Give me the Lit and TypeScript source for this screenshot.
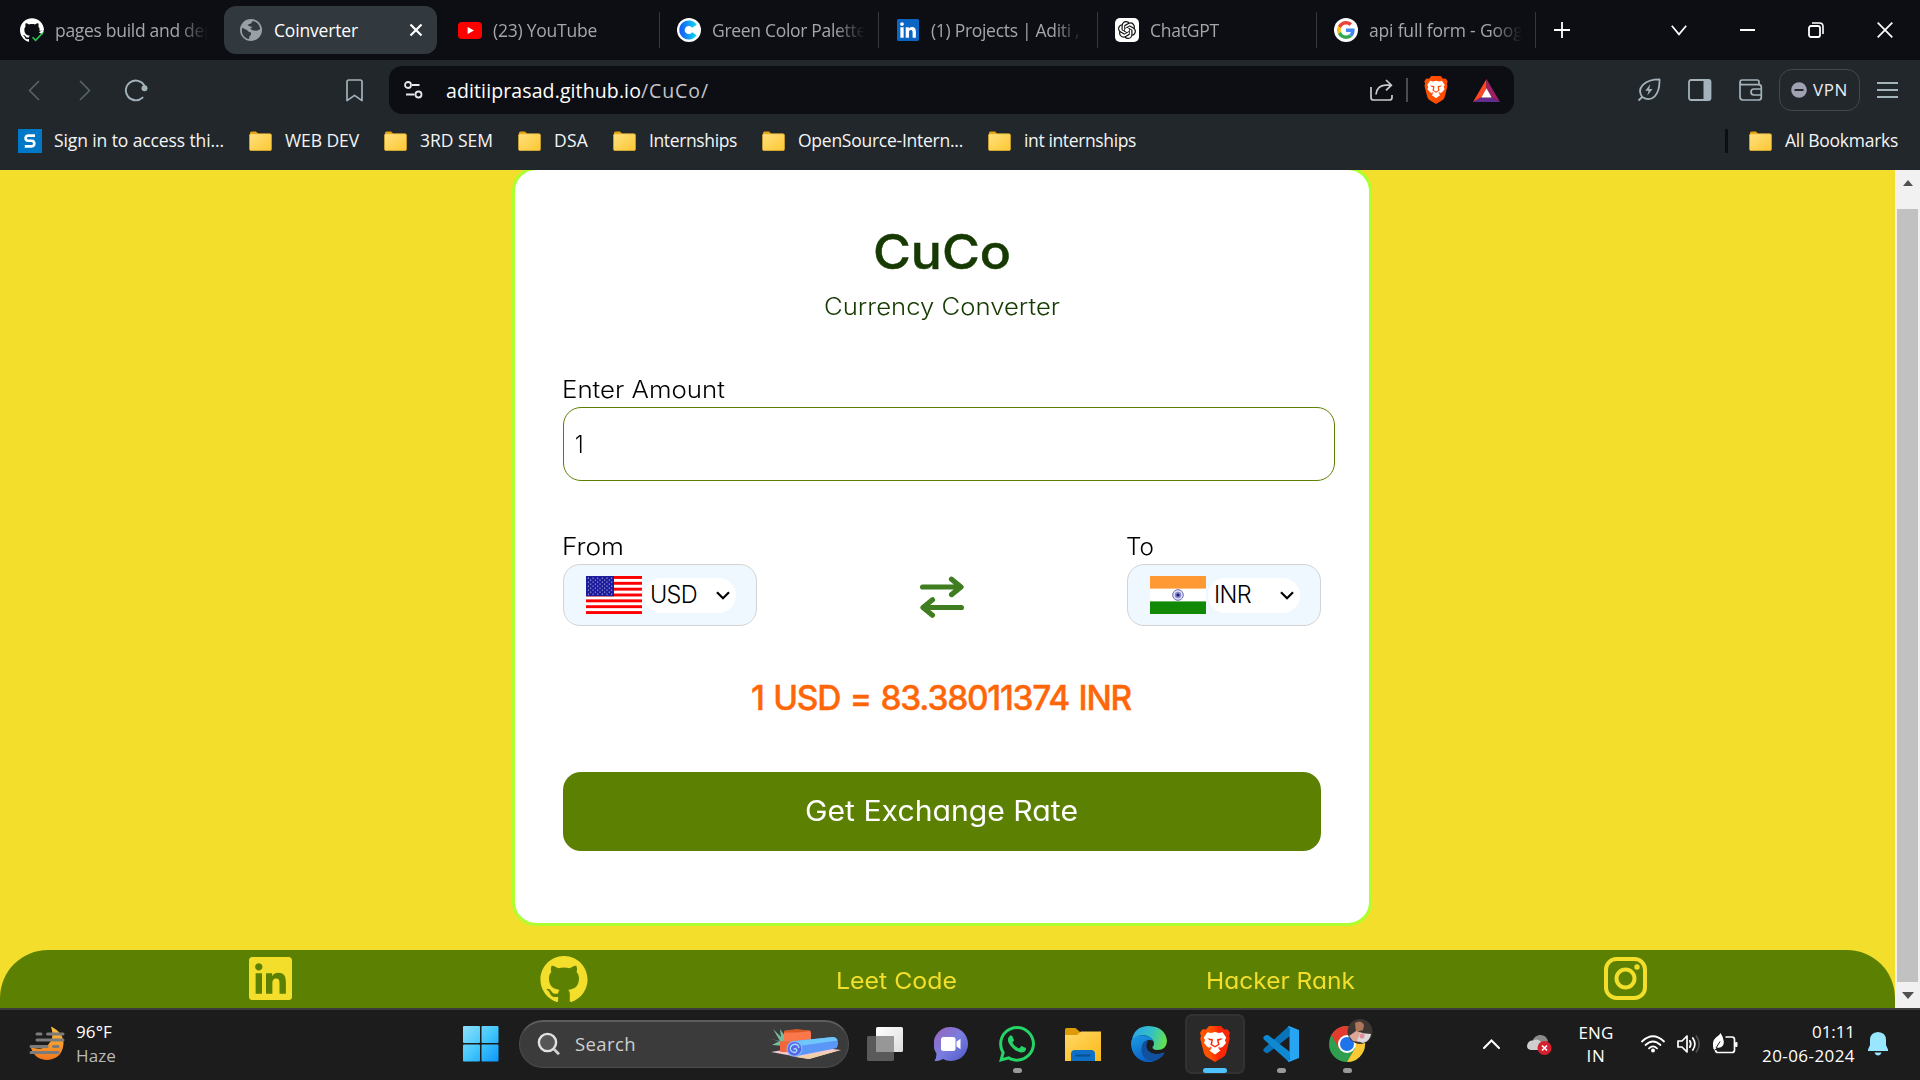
import { LitElement, html, svg, css, TemplateResult } from "lit";
import { customElement, property } from "lit/decorators.js";

/**
 * Single line of text that spans `w` pixels, by adjusting its tracking or,
 * with `stretch`, by widening the letters themselves.
 */
@customElement("fit-text")
class FitText extends LitElement {
  @property({ type: Number }) w = 0;
  @property({ type: Boolean }) stretch = false;
  static styles = css`
    :host { display: inline-block; white-space: nowrap; flex: none; }
    .run { display: inline-block; transform-origin: 0 50%; }
  `;
  render() { return html`<span class="run"><slot></slot></span>`; }
  firstUpdated() {
    const run = this.renderRoot.querySelector(".run") as HTMLElement;
    const n = (this.textContent || "").length;
    const natural = run.getBoundingClientRect().width;
    if (!this.w || !n) return;
    if (this.stretch) run.style.transform = `scaleX(${(this.w / natural).toFixed(4)})`;
    else run.style.letterSpacing = ((this.w - natural) / n).toFixed(3) + "px";
    this.style.width = this.w + "px";
  }
}

const icon = (w: number, h: number, box: string, body: unknown) =>
  html`<svg width=${w} height=${h} viewBox=${box} fill="none">${body}</svg>`;

const GITHUB = "M12 .297c-6.63 0-12 5.373-12 12 0 5.303 3.438 9.8 8.205 11.385.6.113.82-.258.82-.577 0-.285-.01-1.04-.015-2.04-3.338.724-4.042-1.61-4.042-1.61C4.422 18.07 3.633 17.7 3.633 17.7c-1.087-.744.084-.729.084-.729 1.205.084 1.838 1.236 1.838 1.236 1.07 1.835 2.809 1.305 3.495.998.108-.776.417-1.305.76-1.605-2.665-.3-5.466-1.332-5.466-5.93 0-1.31.465-2.38 1.235-3.22-.135-.303-.54-1.523.105-3.176 0 0 1.005-.322 3.3 1.23.96-.267 1.98-.399 3-.405 1.02.006 2.04.138 3 .405 2.28-1.552 3.285-1.23 3.285-1.23.645 1.653.24 2.873.12 3.176.765.84 1.23 1.91 1.23 3.22 0 4.61-2.805 5.625-5.475 5.92.42.36.81 1.096.81 2.22 0 1.606-.015 2.896-.015 3.286 0 .315.21.69.825.57C20.565 22.092 24 17.592 24 12.297c0-6.627-5.373-12-12-12";
const LINKEDIN = "M416 32H31.9C14.3 32 0 46.5 0 64.3v383.4C0 465.5 14.3 480 31.9 480H416c17.6 0 32-14.5 32-32.3V64.3c0-17.8-14.4-32.3-32-32.3zM135.4 416H69V202.2h66.5V416zm-33.2-243c-21.3 0-38.5-17.3-38.5-38.5S80.9 96 102.2 96c21.2 0 38.5 17.3 38.5 38.5 0 21.3-17.2 38.5-38.5 38.5zm282.1 243h-66.4V312c0-24.8-.5-56.7-34.5-56.7-34.6 0-39.9 27-39.9 54.9V416h-66.4V202.2h63.7v29.2h.9c8.9-16.8 30.6-34.5 62.9-34.5 67.2 0 79.7 44.3 79.7 101.9V416z";
const WHATSAPP = "M380.9 97.1C339 55.1 283.2 32 223.9 32c-122.4 0-222 99.6-222 222 0 39.1 10.2 77.3 29.6 111L0 480l117.7-30.9c32.4 17.7 68.9 27 106.1 27h.1c122.3 0 224.1-99.6 224.1-222 0-59.3-25.2-115-67.1-157zm-157 341.6c-33.2 0-65.7-8.9-94-25.7l-6.7-4-69.8 18.3L72 359.2l-4.4-7c-18.5-29.4-28.2-63.3-28.2-98.2 0-101.7 82.8-184.5 184.6-184.5 49.3 0 95.6 19.2 130.4 54.1 34.8 34.9 56.2 81.2 56.1 130.5 0 101.8-84.9 184.6-186.6 184.6zm101.2-138.2c-5.5-2.8-32.8-16.2-37.9-18-5.1-1.9-8.8-2.8-12.5 2.8-3.7 5.6-14.3 18-17.6 21.8-3.2 3.7-6.5 4.2-12 1.4-32.6-16.3-54-29.1-75.5-66-5.7-9.8 5.7-9.1 16.3-30.3 1.8-3.7.9-6.9-.5-9.7-1.4-2.8-12.5-30.1-17.1-41.2-4.5-10.8-9.1-9.3-12.5-9.5-3.2-.2-6.9-.2-10.6-.2-3.7 0-9.7 1.4-14.8 6.9-5.1 5.6-19.4 19-19.4 46.3 0 27.3 19.9 53.7 22.6 57.4 2.8 3.7 39.1 59.7 94.8 83.8 35.2 15.2 49 16.5 66.6 13.9 10.7-1.6 32.8-13.4 37.4-26.4 4.6-13 4.6-24.1 3.2-26.4-1.3-2.5-5-3.9-10.5-6.6z";
const OPENAI = "M22.2819 9.8211a5.9847 5.9847 0 0 0-.5157-4.9108 6.0462 6.0462 0 0 0-6.5098-2.9A6.0651 6.0651 0 0 0 4.9807 4.1818a5.9847 5.9847 0 0 0-3.9977 2.9 6.0462 6.0462 0 0 0 .7427 7.0966 5.98 5.98 0 0 0 .511 4.9107 6.051 6.051 0 0 0 6.5146 2.9001A5.9847 5.9847 0 0 0 13.2599 24a6.0557 6.0557 0 0 0 5.7718-4.2058 5.9894 5.9894 0 0 0 3.9977-2.9001 6.0557 6.0557 0 0 0-.7475-7.0729zm-9.022 12.6081a4.4755 4.4755 0 0 1-2.8764-1.0408l.1419-.0804 4.7783-2.7582a.7948.7948 0 0 0 .3927-.6813v-6.7369l2.02 1.1686a.071.071 0 0 1 .038.052v5.5826a4.504 4.504 0 0 1-4.4945 4.4944zm-9.6607-4.1254a4.4708 4.4708 0 0 1-.5346-3.0137l.142.0852 4.783 2.7582a.7712.7712 0 0 0 .7806 0l5.8428-3.3685v2.3324a.0804.0804 0 0 1-.0332.0615L9.74 19.9502a4.4992 4.4992 0 0 1-6.1408-1.6464zM2.3408 7.8956a4.485 4.485 0 0 1 2.3655-1.9728V11.6a.7664.7664 0 0 0 .3879.6765l5.8144 3.3543-2.0201 1.1685a.0757.0757 0 0 1-.071 0l-4.8303-2.7865A4.504 4.504 0 0 1 2.3408 7.872zm16.5963 3.8558L13.1038 8.364 15.1192 7.2a.0757.0757 0 0 1 .071 0l4.8303 2.7913a4.4944 4.4944 0 0 1-.6765 8.1042v-5.6772a.79.79 0 0 0-.407-.667zm2.0107-3.0231l-.142-.0852-4.7735-2.7818a.7759.7759 0 0 0-.7854 0L9.409 9.2297V6.8974a.0662.0662 0 0 1 .0284-.0615l4.8303-2.7866a4.4992 4.4992 0 0 1 6.6802 4.66zM8.3065 12.863l-2.02-1.1638a.0804.0804 0 0 1-.038-.0567V6.0742a4.4992 4.4992 0 0 1 7.3757-3.4537l-.142.0805L8.704 5.459a.7948.7948 0 0 0-.3927.6813zm1.0976-2.3654l2.602-1.4998 2.6069 1.4998v2.9994l-2.5974 1.4997-2.6067-1.4997Z";

const favicons: Record<string, TemplateResult> = {
  actions: icon(24, 24, "0 0 24 24", svg`
    <path d=${GITHUB} fill="#fff"/><path d="M10 24 V17.5 L15 14 L24 12 V24 Z" fill="#0d0e13"/>
    <path d="M23.6 11 A11.8 11.8 0 0 1 22.6 16.5 L19 14.6 Z" fill="#fff"/>
    <path d="M12.5 19.3 L15.6 22.4 L22.8 14.8" stroke="#2bc653" stroke-width="1.6"/>`),
  globe: icon(22, 22, "0 0 24 24", svg`
    <circle cx="12" cy="12" r="12" fill="#9aa0a6"/>
    <path d="M2.2 9.5 L7.5 12 L9.8 14.2 L12 14.8 V17.2 L10.3 18.8 L10 21.9 C5.5 21.3 2 17.5 2 12.5 Z" fill="#323a3f"/>
    <path d="M13.8 2.2 C18.5 2.9 21.6 6.5 22 11.2 L18.2 12.8 L13.6 12.2 L11.2 10.6 L13.6 8.6 L10.2 8 L8.2 6.3 L12 5 Z" fill="#323a3f"/>`),
  youtube: icon(24, 17, "0 0 24 17", svg`
    <rect width="24" height="17" rx="4" fill="#f00"/><path d="M9.6 4.9 L16 8.5 L9.6 12.1 Z" fill="#fff"/>`),
  canva: icon(24, 24, "0 0 24 24", svg`
    <defs><linearGradient id="cc" x1="0" x2="1"><stop offset="0" stop-color="#1467f5"/><stop offset="1" stop-color="#10cbf5"/></linearGradient></defs>
    <circle cx="12" cy="12" r="12" fill="#fff"/>
    <path d="M17.4 8.2 A6.8 6.8 0 1 0 17.4 15.8" stroke="url(#cc)" stroke-width="5.4"/>`),
  linkedin: icon(22, 22, "0 0 22 22", svg`
    <rect x=".5" y=".5" width="21" height="21" rx="2" fill="#fff"/><svg width="22" height="22" viewBox="0 32 448 448"><path d=${LINKEDIN} fill="#0a66c2"/></svg>`),
  chatgpt: icon(24, 24, "0 0 24 24", svg`
    <rect width="24" height="24" rx="5" fill="#fff"/><svg x="3" y="3" width="18" height="18" viewBox="0 0 24 24"><path d=${OPENAI} fill="#111"/></svg>`),
  google: icon(24, 24, "0 0 24 24", svg`
    <circle cx="12" cy="12" r="12" fill="#fff"/>
    <svg x="3" y="3" width="18" height="18" viewBox="0 0 48 48">
      <path fill="#EA4335" d="M24 9.5c3.54 0 6.71 1.22 9.21 3.6l6.85-6.85C35.9 2.38 30.47 0 24 0 14.62 0 6.51 5.38 2.56 13.22l7.98 6.19C12.43 13.72 17.74 9.5 24 9.5z"/>
      <path fill="#4285F4" d="M46.98 24.55c0-1.57-.15-3.09-.38-4.55H24v9.02h12.94c-.58 2.96-2.26 5.48-4.78 7.18l7.73 6c4.51-4.18 7.09-10.36 7.09-17.65z"/>
      <path fill="#FBBC05" d="M10.53 28.59c-.48-1.45-.76-2.99-.76-4.59s.27-3.14.76-4.59l-7.98-6.19C.92 16.46 0 20.12 0 24c0 3.88.92 7.54 2.56 10.78l7.97-6.19z"/>
      <path fill="#34A853" d="M24 48c6.48 0 11.93-2.13 15.89-5.81l-7.73-6c-2.15 1.45-4.92 2.3-8.16 2.3-6.26 0-11.57-4.22-13.47-9.91l-7.98 6.19C6.51 42.62 14.62 48 24 48z"/>
    </svg>`),
};

const lion = (w: number, h: number, id: string, a: string, b: string) => icon(w, h, "0 0 30 36", svg`
  <defs><linearGradient id=${id} x1="0" x2="1"><stop offset=".35" stop-color=${a}/><stop offset=".65" stop-color=${b}/></linearGradient></defs>
  <path d="M9 0 H21 L24 3.4 L27.4 3.2 L30 6.8 L29 10 L29.8 12.5 L26 27.5 Q25 30 22.5 31.5 L15 36 L7.5 31.5 Q5 30 4 27.5 L.2 12.5 L1 10 L0 6.8 L2.6 3.2 L6 3.4 Z" fill="url(#${id})"/>
  <path d="M7.4 6.2 L11 7 L15 6.1 L19 7 L22.6 6.2 L26.2 11.4 L25 14.3 L26 17 L22.8 20.8 L18.3 22.7 L20.6 24.5 L15 28.6 L9.4 24.5 L11.7 22.7 L7.2 20.8 L4 17 L5 14.3 L3.8 11.4 Z" fill="#fff"/>
  <path d="M7.2 12.2 L12.6 12.9 L13 14 L12.1 18.3 L15 20 L17.9 18.3 L17 14 L17.4 12.9 L22.8 12.2 L20.4 14.3 L18.6 14.4 L19.6 18.7 L15 21.6 L10.4 18.7 L11.4 14.4 L9.6 14.3 Z" fill=${b}/>
  <path d="M9.5 20.3 L11.8 21.6 L11 22.4 Z M20.5 20.3 L18.2 21.6 L19 22.4 Z" fill=${b}/>`);

const folder = icon(23, 20, "0 0 23 20", svg`
  <defs><linearGradient id="fo" x1="0" y1="0" x2="1" y2="1"><stop offset="0" stop-color="#ffe17e"/><stop offset="1" stop-color="#fcc732"/></linearGradient></defs>
  <path d="M1 2 Q1 .5 2.5 .5 H7 L9.5 3 V6 H1 Z" fill="#e8a30c"/>
  <rect x=".5" y="2.7" width="22" height="17" rx="1.6" fill="url(#fo)" stroke="#d9a62a" stroke-width=".7"/>`);

const chevronDown = icon(14, 9, "0 0 14 9", svg`<path d="M1 1.2 L7 7.2 L13 1.2" stroke="#000" stroke-width="2.2"/>`);

const flagUS = icon(56, 38, "0 0 56 38", svg`
  <rect width="56" height="38" fill="#fff"/>
  ${[0, 1, 2, 3, 4, 5, 6].map(i => svg`<rect y=${(i * 2 * 38) / 13} width="56" height="2.92" fill="#ff0000"/>`)}
  <rect width="28" height="20.2" fill="#1b1b9b"/>
  ${Array.from({ length: 9 }, (_, r) => Array.from({ length: r % 2 ? 5 : 6 }, (_, c) =>
    svg`<circle cx=${2.4 + c * 4.65 + (r % 2 ? 2.3 : 0)} cy=${2.1 + r * 2} r=".65" fill="#c9c9ee"/>`))}`);

const flagIN = icon(56, 38, "0 0 56 38", svg`
  <rect width="56" height="38" fill="#fff"/><rect width="56" height="12.6" fill="#ff9933"/><rect y="25.4" width="56" height="12.6" fill="#128807"/>
  <circle cx="28" cy="19" r="5.3" fill="#e2e2f4" stroke="#6a6ab8" stroke-width="1"/><circle cx="28" cy="19" r="3.2" fill="#8a8acb"/><circle cx="28" cy="19" r="1.6" fill="#1a1a8c"/>`);

const tabs = [
  { icon: "actions", title: "pages build and deployment", w: 224 },
  { icon: "globe", title: "Coinverter", w: 84, active: true },
  { icon: "youtube", title: "(23) YouTube", w: 104, sep: true },
  { icon: "canva", title: "Green Color Palettes", w: 162, sep: true },
  { icon: "linkedin", title: "(1) Projects | Aditi , Prasad", w: 207, sep: true },
  { icon: "chatgpt", title: "ChatGPT", w: 69, sep: true },
  { icon: "google", title: "api full form - Google Search", w: 226, sep: true },
];

const bookmarks: [string, number][] = [
  ["WEB DEV", 74], ["3RD SEM", 73], ["DSA", 34], ["Internships", 88], ["OpenSource-Intern...", 165], ["int internships", 112],
];

@customElement("app-root")
class AppRoot extends LitElement {
  static styles = css`
    :host { display: flex; flex-direction: column; width: 1920px; height: 1080px; overflow: hidden; font-family: "Open Sans", "Noto Sans", sans-serif; font-size: 17.5px; color: #fff; }
    * { box-sizing: border-box; }
    svg { display: block; flex: none; }
    .c { display: flex; align-items: center; justify-content: center; }

    .tabs { height: 60px; flex: none; display: flex; align-items: center; background: #0d0e13; padding-left: 3px; }
    .tab { width: 219px; height: 48px; flex: none; display: flex; align-items: center; padding-left: 17px; color: #a5a6a9; }
    .tab.sep { border-right: 1px solid #36373c; height: 36px; }
    .tab .fav { width: 24px; flex: none; margin-right: 11px; display: flex; justify-content: center; }
    .tab .label { width: 153px; overflow: hidden; line-height: 26px; margin-top: -1px; -webkit-mask-image: linear-gradient(90deg, #000 80%, transparent 100%); mask-image: linear-gradient(90deg, #000 80%, transparent 100%); }
    .tab.active { background: #31383e; border-radius: 12px; width: 213px; margin: 0 4px 0 2px; padding-left: 15px; color: #fff; }
    .tab.active .label { width: 133px; -webkit-mask-image: none; mask-image: none; }
    .tabs .plus { width: 54px; height: 36px; margin-left: -1px; }
    .tabs .win { margin-left: auto; margin-right: 1px; display: grid; grid-template-columns: repeat(4, 68.6px); align-items: center; justify-items: center; }

    .toolbar { height: 60px; flex: none; display: grid; grid-template-columns: 8px 51px 51px 51px 158px 70px 1125px 109px 51px 51px 51px 87px 1fr; align-items: center; background: #22272b; justify-items: center; }
    .toolbar .b1 { grid-column: 2; }
    .toolbar .mark { grid-column: 6; }
    .address { grid-column: 7; width: 1125px; height: 48px; border-radius: 13px; background: #0d0e13; display: flex; align-items: center; padding-left: 15px; font-size: 19.5px; line-height: 28px; }
    .address .site { margin-left: 23px; padding-top: 1px; }
    .address .path { color: #c4c5c8; padding-top: 1px; }
    .address .right { margin-left: auto; display: flex; align-items: center; padding-right: 14px; }
    .address .bar { width: 2px; height: 24px; background: #4b4c51; margin: 0 16px 0 13px; }
    .address .right svg:last-child { margin-left: 25px; }
    .leafcell { grid-column: 9; }
    .vpn { width: 81px; height: 42px; border: 1.5px solid #3e4a4f; border-radius: 13px; display: flex; align-items: center; padding-left: 11px; gap: 6px; color: #eceef0; font-size: 17px; }
    .vpn fit-text { margin-top: -1px; }
    .menu { justify-self: start; margin-left: 14px; }

    .marks { height: 50px; flex: none; background: #22272b; display: flex; align-items: flex-start; padding: 6px 22px 0 18px; font-size: 17.5px; color: #f4f5f6; }
    .mark-item { height: 30px; display: flex; align-items: center; gap: 13px; margin-left: 25px; }
    .mark-item fit-text { margin-top: -2px; }
    .mark-item.first { margin-left: 0; gap: 12px; }
    .mark-item.all { margin-left: 21px; }
    .marks .bar { width: 3px; height: 24px; border-radius: 1px; margin: 3px 0 0 auto; background: #0d0e13; }

    .view { height: 838px; flex: none; display: flex; background: #f1f1f1; }
    .page { width: 1895px; height: 838px; overflow: hidden; background: #f3de2c; display: flex; flex-direction: column; font-family: Inter, sans-serif; font-feature-settings: "cv11"; }
    .card { width: 860px; height: 759px; flex: none; margin: -3px 0 0 512px; border: 3px solid #adff2f; border-radius: 24px; background: #fff; padding: 0 48px; color: #000; font-size: 23.5px; font-weight: 300; }
    .title { display: flex; justify-content: center; margin-top: 53px; height: 58px; line-height: 58px; font-size: 48px; font-weight: 500; color: #163a02; -webkit-text-stroke: .5px #163a02; }
    .sub { display: flex; justify-content: center; height: 30px; line-height: 30px; margin-top: 11px; color: #163a02; }
    .lab { height: 30px; line-height: 30px; margin-left: -1px; }
    .amount-lab { margin-top: 53px; }
    .amount { margin-top: 2px; width: 772px; height: 74px; border: 1px solid #5c8001; border-radius: 18px; padding-left: 11px; line-height: 74px; }
    .pair { display: flex; margin-top: 51px; width: 758px; justify-content: space-between; }
    .pick { margin-top: 2px; width: 194px; height: 62px; border: 1px solid #d3d3d3; border-radius: 17px; background: #f0f8ff; display: flex; align-items: center; padding-left: 22px; }
    .sel { width: 92px; height: 35px; margin-left: 2px; border-radius: 18px; background: #fff; display: flex; align-items: center; justify-content: space-between; padding: 0 6px; line-height: 34px; }
    .swap { padding-top: 44px; }
    .result { display: flex; justify-content: center; width: 756px; margin-top: 51px; height: 44px; line-height: 43px; font-size: 33.5px; font-weight: 500; color: #ff6608; -webkit-text-stroke: .4px #ff6608; word-spacing: 2px; }
    .go { margin-top: 51px; width: 758px; height: 79px; border-radius: 18px; background: #5c8001; color: #fff; font-size: 28px; font-weight: 400; padding: 0 1px 1px 0; }
    .foot { margin-top: auto; height: 58px; flex: none; border-radius: 48px 48px 0 0; background: #5c8001; color: #f3de2c; font-size: 23.5px; font-weight: 400; display: grid; grid-template-columns: 540px 296px 370px 398px 1fr; align-items: center; }
    .foot .li { margin-left: 249px; }
    .foot svg { margin-top: -1px; }
    .foot .txt { padding-top: 2px; }
    .scroll { width: 25px; height: 838px; display: flex; flex-direction: column; align-items: center; padding: 10px 0 9px; }
    .thumb { width: 21px; height: 773px; margin-top: 23px; margin-bottom: auto; background: #c1c1c1; }

    .task { height: 72px; flex: none; border-top: 2px solid #3b3b3c; background: #1c1c1c; display: grid; grid-template-columns: 29px 47px 372px 66px 5px 333px 66px 66px 66px 66px 66px 66px 66px 66px 80px 1fr; align-items: center; font-size: 17px; }
    .weather { grid-column: 2; margin-top: -3px; }
    .wtext { line-height: 24px; display: flex; flex-direction: column; color: #fff; margin-top: -2px; }
    .wtext .dim { color: #b9b9b9; }
    .search { grid-column: 6; width: 330px; height: 48px; margin-top: -3px; border-radius: 24px; background: #3b3b3b; border: 1px solid #4c4c4c; border-top: 2px solid #5c5c5c; display: flex; align-items: center; padding: 0 7px 0 17px; color: #cfcfcf; font-size: 18.5px; gap: 14px; }
    .search fit-text { margin-top: -1px; }
    .search .pic { margin-left: auto; }
    .app { width: 66px; height: 60px; position: relative; display: flex; align-items: center; justify-content: center; margin-top: -2px; }
    .app .dot { position: absolute; bottom: 1px; width: 9px; height: 5px; border-radius: 3px; background: #999; }
    .app.on { width: 60px; margin-left: 3px; border-radius: 7px; background: #2a2a2a; border: 2px solid #323232; }
    .app.on .dot { bottom: -1px; width: 24px; background: #4cc2ff; }
    .start { margin-top: -3px; }
    .tray { grid-column: 16; display: grid; grid-template-columns: 44px 52px 62px 36px 36px 49px 93px 13px 20px; align-items: center; line-height: 23px; margin-top: -3px; padding-left: 23px; }
    .lang { display: flex; flex-direction: column; align-items: center; width: 34px; margin-top: 1px; }
    .clock { display: flex; flex-direction: column; align-items: flex-end; line-height: 24px; }
  `;

  private app(pic: unknown, dot = false, on = false) {
    return html`<div class="app ${on ? "on" : ""}">${pic}${dot ? html`<span class="dot"></span>` : ""}</div>`;
  }

  private renderTabs() {
    return html`<div class="tabs">
      ${tabs.map(t => html`<div class="tab ${t.active ? "active" : ""} ${t.sep ? "sep" : ""}">
        <span class="fav">${favicons[t.icon]}</span>
        <span class="label"><fit-text .w=${t.w}>${t.title}</fit-text></span>
        ${t.active ? icon(18, 14, "0 0 18 14", svg`<path d="M3.5 1.5 L14.5 12.5 M14.5 1.5 L3.5 12.5" stroke="#fff" stroke-width="2.2"/>`) : ""}
      </div>`)}
      <div class="plus c">${icon(16, 16, "0 0 16 16", svg`<path d="M8 0 V16 M0 8 H16" stroke="#fff" stroke-width="1.8"/>`)}</div>
      <div class="win">
        ${icon(16, 11, "0 0 16 11", svg`<path d="M.8 .8 L8 9.4 L15.2 .8" stroke="#fff" stroke-width="1.7"/>`)}
        ${icon(16, 3, "0 0 16 3", svg`<rect width="15" height="2" fill="#fff"/>`)}
        ${icon(16, 16, "0 0 16 16", svg`<rect x="1" y="4" width="11" height="11" rx="2" stroke="#fff" stroke-width="1.8"/><path d="M4 1 H11.5 Q15 1 15 4.5 V12" stroke="#fff" stroke-width="1.6"/>`)}
        ${icon(16, 16, "0 0 16 16", svg`<path d="M.7 .7 L15.3 15.3 M15.3 .7 L.7 15.3" stroke="#fff" stroke-width="1.7"/>`)}
      </div>
    </div>`;
  }

  private renderToolbar() {
    const g = "#a3b2bb";
    return html`<div class="toolbar">
      <div class="b1">${icon(12, 21, "0 0 12 21", svg`<path d="M11 1 L1.5 10.5 L11 20" stroke="#57646a" stroke-width="1.6"/>`)}</div>
      ${icon(12, 21, "0 0 12 21", svg`<path d="M1 1 L10.5 10.5 L1 20" stroke="#57646a" stroke-width="1.6"/>`)}
      ${icon(24, 23, "0 0 24 23", svg`<path d="M18.6 18.6 A9.9 9.9 0 1 1 20.4 6.6" stroke=${g} stroke-width="1.9" stroke-linecap="round"/><circle cx="20.5" cy="9.2" r="3" fill=${g}/>`)}
      <div class="mark">${icon(17, 23, "0 0 17 23", svg`<path d="M1 2.8 Q1 1 2.8 1 H14.2 Q16 1 16 2.8 V21.6 L8.5 16.4 L1 21.6 Z" stroke=${g} stroke-width="1.7" stroke-linejoin="round"/>`)}</div>
      <div class="address">
        ${icon(19, 18, "0 0 19 18", svg`<g stroke="#e6e7e8" stroke-width="1.8"><circle cx="4" cy="4" r="3"/><path d="M8 4 H15.5 M2 13.5 H10.5"/><circle cx="14.5" cy="13.5" r="3"/></g>`)}
        <span class="site"><fit-text .w=${195}>aditiiprasad.github.io</fit-text></span><span class="path"><fit-text .w=${68}>/CuCo/</fit-text></span>
        <div class="right">
          ${icon(23, 22, "0 0 23 22", svg`<path d="M1 8 V18.5 Q1 21 3.5 21 H19.5 Q22 21 22 18.5 V16 M6 15.5 Q7 6.5 15.5 6.2 H21 M16 1 L21.4 6.2 L16 11.4" stroke="#c8cacc" stroke-width="1.7"/>`)}
          <span class="bar"></span>
          ${lion(24, 28, "lionA", "#ff5000", "#ff4a00")}
          ${icon(27, 23, "0 0 27 23", svg`<path d="M13.5 0 L0 23 L8.5 18.3 L13.5 9.2 Z" fill="#ff4724"/><path d="M13.5 0 L27 23 L18.5 18.3 L13.5 9.2 Z" fill="#9e1f63"/><path d="M0 23 H27 L18.5 18.3 H8.5 Z" fill="#662d91"/><path d="M13.5 9.2 L18.7 18.4 H8.3 Z" fill="#fff"/>`)}
        </div>
      </div>
      <div class="leafcell">${icon(24, 24, "0 0 24 24", svg`<path d="M1.5 22.5 L5.2 19 C-1 10 7.5 1.3 22.5 1.3 C23 17 15 25 5.2 19" stroke=${g} stroke-width="1.8" stroke-linejoin="round"/><path d="M13.3 6.3 L8.2 12.8 H11.6 L10.3 17.6 L15.6 11 H12.2 Z" fill=${g}/>`)}</div>
      ${icon(24, 22, "0 0 24 22", svg`<rect x="1" y="1" width="21.5" height="20" rx="2" stroke=${g} stroke-width="1.8"/><path d="M15.5 1 H21 Q22.5 1 22.5 2.5 V19.5 Q22.5 21 21 21 H15.5 Z" fill=${g}/>`)}
      ${icon(24, 22, "0 0 24 22", svg`<g stroke=${g} stroke-width="1.7"><path d="M20 5.5 V3 Q20 1 18 1 H3 Q1 1 1 3.5 V18 Q1 21 4 21 H19.5 Q22.3 21 22.3 18.5 V8 Q22.3 5.6 19.5 5.6 H3 Q1 5.4 1 3.2"/><path d="M22.5 10 H15 Q12 10 12 13 Q12 16 15 16 H22.5"/></g>`)}
      <div class="vpn">${icon(16, 16, "0 0 16 16", svg`<circle cx="8" cy="8" r="7.8" fill="#a0a1b2"/><rect x="3.5" y="7" width="9" height="2" fill="#22272b"/>`)}<fit-text .w=${35}>VPN</fit-text></div>
      <div class="menu">${icon(21, 16, "0 0 21 16", svg`<path d="M0 1 H21 M0 8 H21 M0 15 H21" stroke=${g} stroke-width="1.8"/>`)}</div>
    </div>`;
  }

  private renderMarks() {
    return html`<div class="marks">
      <div class="mark-item first">${icon(24, 24, "0 0 24 24", svg`<rect width="24" height="24" fill="#0078c8"/><path d="M17 6.6 H10.5 Q7.6 6.6 7.6 9.2 Q7.6 11.6 10.5 11.8 H13.6 Q16.3 12 16.3 14.6 Q16.3 17.4 13.5 17.4 H6.8" stroke="#fff" stroke-width="2.6"/>`)}<fit-text .w=${170}>Sign in to access thi...</fit-text></div>
      ${bookmarks.map(([t, w]) => html`<div class="mark-item">${folder}<fit-text .w=${w}>${t}</fit-text></div>`)}
      <span class="bar"></span>
      <div class="mark-item all">${folder}<fit-text .w=${113}>All Bookmarks</fit-text></div>
    </div>`;
  }

  private picker(label: string, lw: number, flag: unknown, code: string, w: number) {
    return html`<div>
      <div class="lab"><fit-text stretch .w=${lw}>${label}</fit-text></div>
      <div class="pick">${flag}<div class="sel"><fit-text .w=${w}>${code}</fit-text>${chevronDown}</div></div>
    </div>`;
  }

  private renderPage() {
    return html`<div class="view">
      <div class="page">
        <div class="card">
          <div class="title"><fit-text stretch .w=${138}>CuCo</fit-text></div>
          <div class="sub"><fit-text stretch .w=${236}>Currency Converter</fit-text></div>
          <div class="lab amount-lab"><fit-text stretch .w=${163}>Enter Amount</fit-text></div>
          <div class="amount"><fit-text stretch .w=${8.5}>1</fit-text></div>
          <div class="pair">
            ${this.picker("From", 62, flagUS, "USD", 47)}
            <div class="swap">${icon(44, 42, "0 0 44 42", svg`<path d="M2.6 11 H40 M31.5 3.2 L41 11 L31.5 18.6 M41.4 31.5 H4 M12.5 23.8 L3 31.5 L12.5 39.2" stroke="#3f7d20" stroke-width="5.2" stroke-linecap="round" stroke-linejoin="round"/>`)}</div>
            ${this.picker("To", 28, flagIN, "INR", 37)}
          </div>
          <div class="result"><fit-text .w=${380}>1 USD = 83.38011374 INR</fit-text></div>
          <div class="go c"><fit-text stretch .w=${273}>Get Exchange Rate</fit-text></div>
        </div>
        <div class="foot">
          <div class="li">${icon(43, 43, "0 32 448 448", svg`<path d=${LINKEDIN} fill="#f3de2c"/>`)}</div>
          <div class="gh">${icon(48, 46, "0 .3 24 23.4", svg`<path d=${GITHUB} fill="#f3de2c"/>`)}</div>
          <div class="txt"><fit-text stretch .w=${121}>Leet Code</fit-text></div>
          <div class="txt"><fit-text stretch .w=${149}>Hacker Rank</fit-text></div>
          <div>${icon(43, 43, "0 0 43 43", svg`<rect x="2" y="2" width="39" height="39" rx="10.5" stroke="#f3de2c" stroke-width="4"/><circle cx="21.5" cy="21.5" r="9" stroke="#f3de2c" stroke-width="4"/><circle cx="33" cy="10" r="2.7" fill="#f3de2c"/>`)}</div>
        </div>
      </div>
      <div class="scroll">
        ${icon(10, 6, "0 0 10 6", svg`<path d="M5 0 L10 6 H0 Z" fill="#505050"/>`)}
        <div class="thumb"></div>
        ${icon(12, 7, "0 0 12 7", svg`<path d="M6 7 L0 0 H12 Z" fill="#505050"/>`)}
      </div>
    </div>`;
  }

  private renderTask() {
    return html`<div class="task">
      <div class="weather">${icon(36, 35, "0 0 36 35", svg`
        <defs><linearGradient id="mn" x1="0" y1="0" x2="0" y2="1"><stop offset="0" stop-color="#fcc443"/><stop offset="1" stop-color="#f0761e"/></linearGradient></defs>
        <path d="M22 .5 Q35 7 34.5 18 Q33 33.5 17 34 Q5 33 1.5 20.5 Q12 25.5 19 19 Q26 12 22 .5 Z" fill="url(#mn)"/>
        <path d="M8 8 H12 M18.5 8 H34 M8 14 H34 M2 20.5 H18 M24.5 20.5 H29 M2 26.5 H29" stroke="#7b7b7b" stroke-width="3" stroke-linecap="round"/>`)}</div>
      <div class="wtext"><fit-text .w=${36}>96°F</fit-text><span class="dim"><fit-text .w=${40}>Haze</fit-text></span></div>
      <div class="start c">${icon(36, 36, "0 0 36 36", svg`
        <defs><linearGradient id="wn" x1="0" y1="0" x2="36" y2="36" gradientUnits="userSpaceOnUse"><stop offset="0" stop-color="#8fe0fb"/><stop offset=".5" stop-color="#43c7fb"/><stop offset="1" stop-color="#0995fb"/></linearGradient></defs>
        <g fill="url(#wn)"><rect width="17" height="17" rx="1"/><rect x="18.5" width="17" height="17" rx="1"/><rect y="18.5" width="17" height="17" rx="1"/><rect x="18.5" y="18.5" width="17" height="17" rx="1"/></g>`)}</div>
      <div class="search">
        ${icon(24, 24, "0 0 24 24", svg`<circle cx="10.5" cy="10.5" r="8.6" fill="#565656" stroke="#e2e2e2" stroke-width="2.4"/><path d="M16.8 17 L22 22.2" stroke="#cfcfcf" stroke-width="2.8"/>`)}
        <fit-text .w=${61}>Search</fit-text>
        <span class="pic">${icon(70, 32, "0 0 70 32", svg`
          <path d="M0 24 L36 18 L70 22 L38 31 Z" fill="#f3c9cf"/>
          <path d="M24 29 L69 22 L38 31 Z" fill="#f2d0a6"/>
          <path d="M2 1 L10 9 L9 1 L14 8 V15 L0 11 L9 13 Z M1 17 L14 10 V18 Z" fill="#74bd9c"/>
          <rect x="9" y="13" width="22" height="11" rx="1.5" fill="#f2663a"/>
          <rect x="13" y="2.5" width="27" height="11" rx="2" fill="#f9774b"/><path d="M13 4.5 Q13 2.5 15 2.5 L26 1 L40 3 L26 4.5 Z" fill="#d95a26"/>
          <path d="M24 13 L62 9 Q67 9.5 67 15 Q67 20 64 20.5 L26 28 Z" fill="#5a97f6"/>
          <path d="M24 13 L62 9 Q66 9.5 66.5 12.5 L28 18 Z" fill="#6fc6fb"/>
          <circle cx="23.5" cy="20.8" r="7.4" fill="#5a62e8" stroke="#7ab8fb" stroke-width="1.2"/><path d="M28 20 Q27 15.5 22.5 16.5 Q18.5 18 19.5 22 Q21.5 25.5 25 24 Q27 21.5 24 20.5 L22.5 21.5" stroke="#9fdcff" stroke-width="1.4"/>`)}</span>
      </div>
      ${this.app(icon(36, 34, "0 0 36 34", svg`
        <defs><linearGradient id="tv" x1="0" x2="1" y2="1"><stop offset="0" stop-color="#fff"/><stop offset="1" stop-color="#dcdcdc"/></linearGradient></defs>
        <rect x="9" y="0" width="27" height="25" rx="1.5" fill="url(#tv)"/><rect x="0" y="9" width="27" height="25" rx="1.5" fill="#5a5a5a"/><path d="M9 9 H27 V25 H9 Z" fill="#979797"/>`))}
      ${this.app(icon(34, 34, "0 0 34 34", svg`
        <defs><linearGradient id="tm" x1="0" y1="0" x2="1" y2="1"><stop offset="0" stop-color="#9a62b8"/><stop offset=".5" stop-color="#7a7ee0"/><stop offset="1" stop-color="#5059c9"/></linearGradient></defs>
        <path d="M17 0 A17 17 0 1 1 9 32 Q5 34.5 .5 34 Q3 30.5 2.2 26 A17 17 0 0 1 17 0 Z" fill="url(#tm)"/><rect x="7" y="10" width="14.5" height="14" rx="2.5" fill="#fff"/><path d="M22.5 14.5 L26.5 11.8 V22.2 L22.5 19.5 Z" fill="#fff"/>`))}
      ${this.app(icon(36, 36, "0 32 448 448", svg`<path d=${WHATSAPP} fill="#25d366"/>`), true)}
      ${this.app(icon(36, 33, "0 0 36 33", svg`
        <defs><linearGradient id="ex" x1="0" y1="0" x2="1" y2="1"><stop offset="0" stop-color="#ffd869"/><stop offset="1" stop-color="#fbb917"/></linearGradient></defs>
        <path d="M0 1.5 Q0 0 1.5 0 H10.5 L15 4 V10 H0 Z" fill="#dd9b0a"/><path d="M0 7 H12 L16 3.5 H36 V33 H0 Z" fill="url(#ex)"/><path d="M6 33 V26 Q6 22 10 22 H26 Q30 22 30 26 V33 Z" fill="#0f6fc5"/><rect x="10" y="26.5" width="15.5" height="2" rx="1" fill="#0a4f94"/>`))}
      ${this.app(icon(36, 36, "0 0 36 36", svg`
        <defs><linearGradient id="e1" x1="0" y1=".3" x2="1" y2=".5"><stop offset="0" stop-color="#2aa5e8"/><stop offset=".55" stop-color="#35c1c4"/><stop offset="1" stop-color="#66e24c"/></linearGradient>
        <linearGradient id="e2" x1="0" y1="0" x2=".4" y2="1"><stop offset="0" stop-color="#1c9de6"/><stop offset="1" stop-color="#0a63c6"/></linearGradient></defs>
        <path d="M.6 15 Q3 0 18 0 Q34.5 1 36 15 Q35.5 24 26 24 Q21 23.5 21.5 21 Q24 18.5 22.3 15 Q19 9 10.5 9.3 Q4 10 .6 15 Z" fill="url(#e1)"/>
        <path d="M.4 14.5 Q4.5 9 11 9.3 Q19 9.5 22 14.5 Q15.5 12.5 12 17.5 Q9 24.5 14 30.5 Q17 34.5 22.5 35.4 Q11 38 4 29.5 Q-1 23 .4 14.5 Z" fill="url(#e2)"/>
        <path d="M12.5 16.5 Q8 24.5 13 31 Q17 36 23 35.3 Q30 33 33.6 27.2 Q33 26 31.5 26.7 Q23 30 17.5 25 Q13.5 20.5 17 15.2 Q14.5 14.2 12.5 16.5 Z" fill="#10509f"/>`))}
      ${this.app(lion(30, 36, "lionB", "#ff5200", "#fb2608"), true, true)}
      ${this.app(icon(36, 36, "0 0 36 36", svg`
        <path d="M26 0 L27 10 L5 27 Q3 27.5 1.5 26 L.5 25 Q0 23.5 1 22.5 Z" fill="#0a72b8"/>
        <path d="M26 36 L27 26 L5 9 Q3 8.5 1.5 10 L.5 11 Q0 12.5 1 13.5 Z" fill="#0f8ad2"/>
        <path d="M26 0 L36 4 V32 L26 36 L24.5 35 Q26.5 35 26.5 33 V3 Q26.5 1 24.5 1 Z" fill="#27a5f2"/>`), true)}
      ${this.app(icon(52, 50, "0 0 52 50", svg`
        <g transform="translate(8 7)"><circle cx="18" cy="18" r="18" fill="#2f9e4f"/>
        <path d="M2.4 9 A18 18 0 0 1 33.6 9 H18 L10 22.5 Z" fill="#e33b2e"/><path d="M33.6 9 A18 18 0 0 1 18 36 L26 22.5 L18 9 Z" fill="#fcc934"/>
        <circle cx="18" cy="18" r="9" fill="#fff"/><circle cx="18" cy="18" r="7" fill="#1f74ea"/></g>
        <g transform="translate(26 0)"><circle cx="13" cy="12.5" r="12.5" fill="#3d3734"/><path d="M8 4 Q14 0 17 6 L16 11 L9 13 Z" fill="#b0765c"/><path d="M2 17 L9 12 L16 14 L12 23 L6 22 Z" fill="#dba796"/><path d="M13 14 L24 15 Q23 22 16 24 L10 22 Z" fill="#ddd9dc"/><circle cx="15" cy="17" r="2.5" fill="#e58c9c"/></g>`), true)}
      <div class="tray">
        ${icon(17, 10, "0 0 17 10", svg`<path d="M1 9 L8.5 1.5 L16 9" stroke="#fff" stroke-width="2" stroke-linecap="round"/>`)}
        ${icon(25, 22, "0 0 25 22", svg`<path d="M5 14 Q4 4 12 2 Q19 1 21 8 L12 14 Z" fill="#8b8b8b"/><path d="M0 13 Q1 7 6 7.5 Q11 4.5 15 10 L12 17 H4 Q0 16.5 0 13 Z" fill="#cfcfcf"/><circle cx="17.5" cy="15" r="7" fill="#d5202f"/><path d="M15 12.5 L20 17.5 M20 12.5 L15 17.5" stroke="#fff" stroke-width="1.7"/>`)}
        <div class="lang"><fit-text .w=${35}>ENG</fit-text><fit-text .w=${19}>IN</fit-text></div>
        ${icon(24, 18, "0 0 24 18", svg`<g stroke="#fff" stroke-width="1.8" stroke-linecap="round"><path d="M1 6.5 Q12 -4 23 6.5"/><path d="M4.5 10 Q12 3 19.5 10"/><path d="M8 13.3 Q12 9.5 16 13.3"/></g><circle cx="12" cy="15.6" r="2" fill="#fff"/>`)}
        ${icon(24, 20, "0 0 24 20", svg`<path d="M1 7 H5 L10 2 V18 L5 13 H1 Z" stroke="#fff" stroke-width="1.7" stroke-linejoin="round"/><path d="M12.8 6.8 Q14.8 10 12.8 13.2 M15.8 4 Q20 10 15.8 16" stroke="#fff" stroke-width="1.7" stroke-linecap="round"/><path d="M19 1.5 Q25.5 10 19 18.5" stroke="#555" stroke-width="1.5"/>`)}
        ${icon(25, 21, "0 0 25 21", svg`<path d="M12.5 4 H19 Q21.5 4 21.5 6.5 V17 Q21.5 19.5 19 19.5 H5 Q2.5 19.5 2.5 17" stroke="#fff" stroke-width="1.7"/><rect x="22" y="9" width="2.5" height="5" rx="1" fill="#fff"/><path d="M7.5 0 Q12.5 7 10 12.5 Q7.5 15.5 4 14.5 L1.5 17 L.5 16 Q-1.5 8 3 4.5 Q6.5 2.5 7.5 0 Z" fill="#fff"/><path d="M3 15 L7 8.5" stroke="#1c1c1c" stroke-width="1"/>`)}
        <div class="clock"><fit-text .w=${43}>01:11</fit-text><fit-text .w=${93}>20-06-2024</fit-text></div>
        <span></span>
        ${icon(20, 24, "0 0 20 24", svg`<path d="M10 0 Q2 .5 2 8 V13 L0 17.5 V19 H20 V17.5 L18 13 V8 Q18 .5 10 0 Z M6.5 20.5 H13.5 Q12.5 23.5 10 23.5 Q7.5 23.5 6.5 20.5 Z" fill="#98e6ff"/>`)}
      </div>
    </div>`;
  }

  render() {
    return html`${this.renderTabs()}${this.renderToolbar()}${this.renderMarks()}${this.renderPage()}${this.renderTask()}`;
  }
}
